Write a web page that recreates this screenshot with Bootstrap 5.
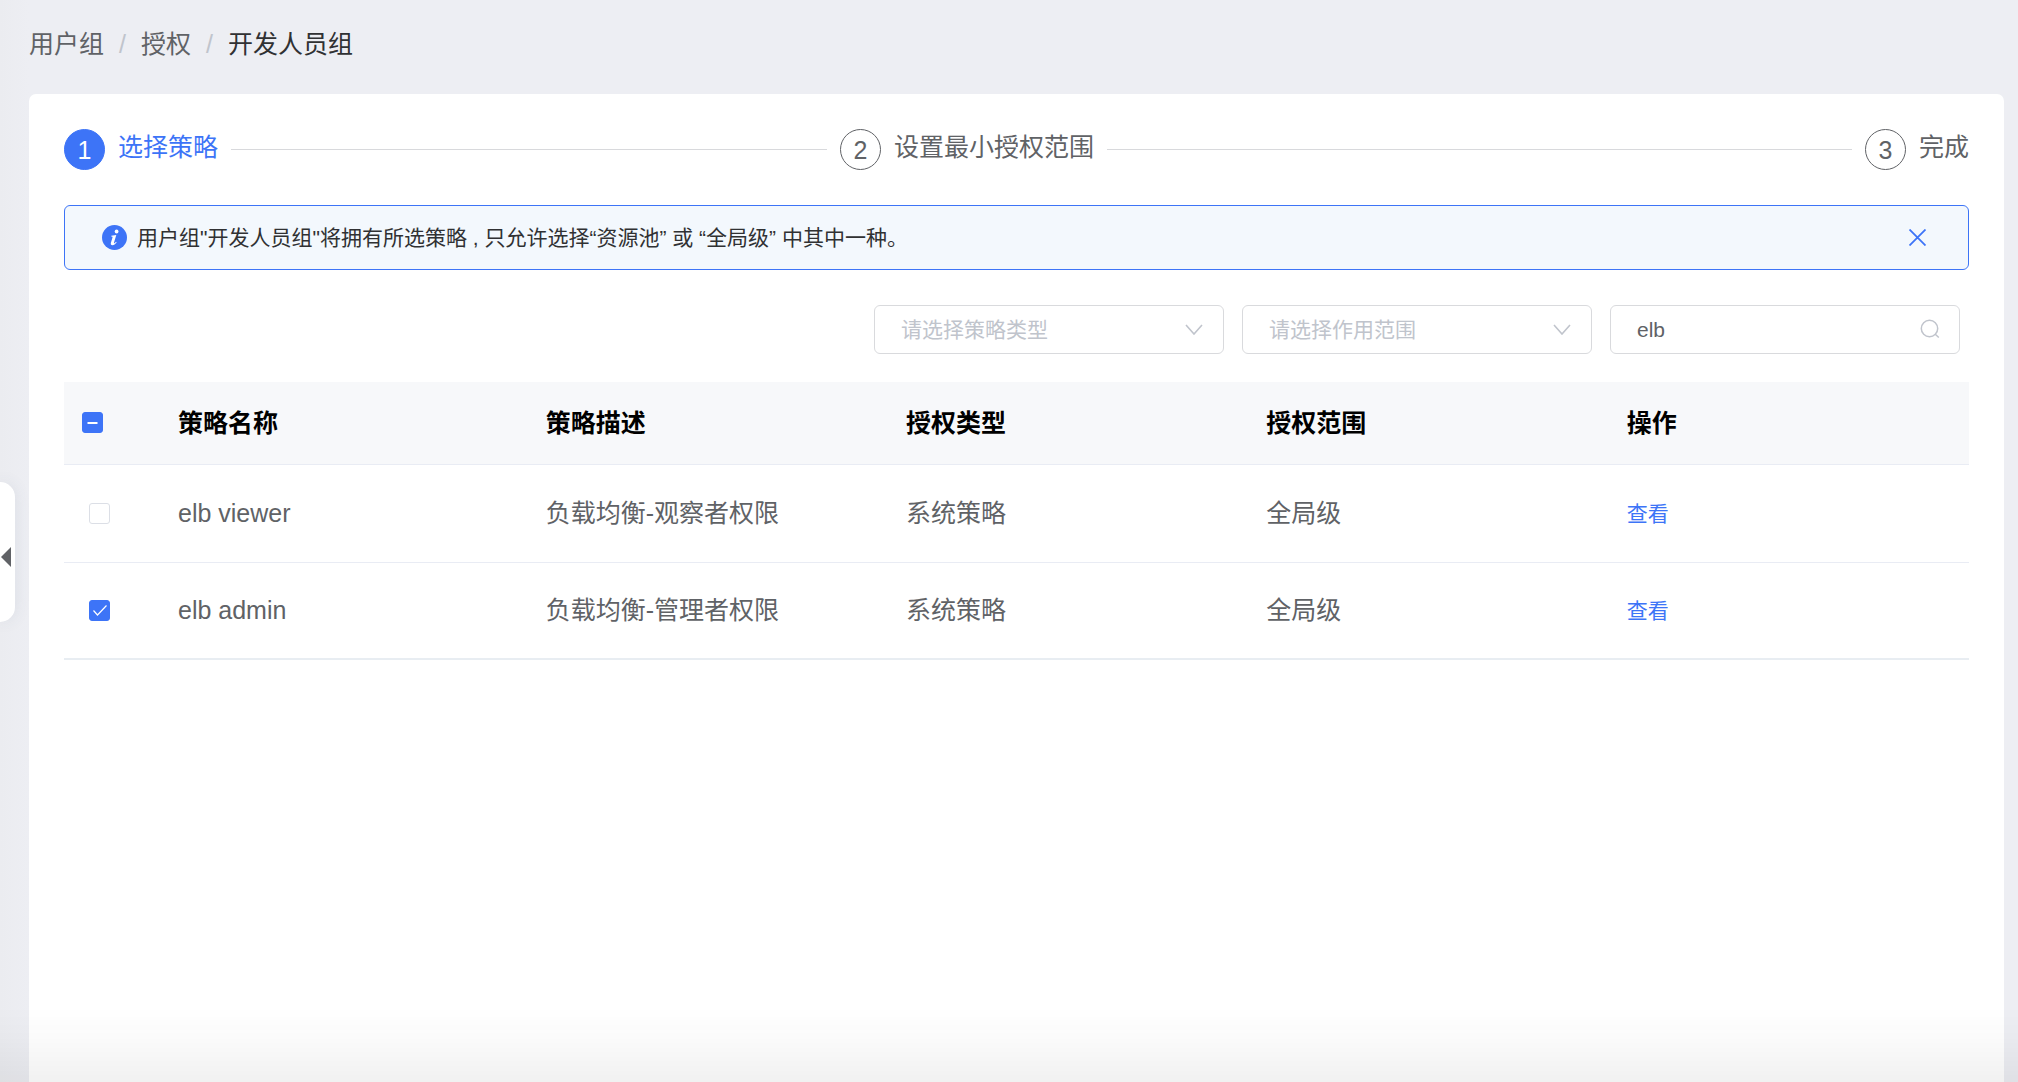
<!DOCTYPE html>
<html lang="zh-CN">
<head>
<meta charset="utf-8">
<meta name="viewport" content="width=device-width, initial-scale=1">
<title>用户组授权</title>
<link href="https://cdn.jsdelivr.net/npm/bootstrap@5.3.0/dist/css/bootstrap.min.css" rel="stylesheet">
<style>
:root { --brand: #3d74f7; --ink: #606266; --hint: #c0c4cc; }
body {
  font-family: "Liberation Sans", "Noto Sans CJK SC", sans-serif;
  font-size: 25px; line-height: 36px; color: var(--ink);
  background: linear-gradient(to right, #ebecf0, #edeef3 29px);
}
.page { padding: 0 14px 0 29px; }
.crumbs { --bs-breadcrumb-divider-color: var(--hint); --bs-breadcrumb-item-padding-x: 15px;
  --bs-breadcrumb-item-active-color: #303133; font-size: 25px; padding: 26px 0 32px; }
.crumbs a { color: var(--ink); text-decoration: none; }
.panel { border-radius: 7px 7px 0 0; padding: 35px 35px 0; }
.steps { height: 41px; gap: 13px; }
.step-item { gap: 13px; }
.step-no { width: 41px; height: 41px; border: 1px solid var(--ink); border-radius: 50%; }
.step-name { padding-bottom: 6px; white-space: nowrap; }
.step-on { color: var(--brand); }
.step-on .step-no { background: var(--brand); border-color: var(--brand); color: #fff; }
.step-line { height: 1px; background: #d8d9dc; flex: 4 1 0; }
.step-line-long { flex-grow: 5; }
.notice { margin: 35px 0; height: 65px; padding: 0 42px 0 37px; border: 1px solid var(--brand);
  border-radius: 6px; background: #f3f8fd; color: #303133; font-size: 21px; line-height: 30px; gap: 10px; }
.notice-x { border: 0; background: none; padding: 0; line-height: 0; }
.filters { gap: 18px; padding-right: 9px; margin-bottom: 28px; }
.filter { width: 350px; height: 49px; border: 1px solid #d9dadd; border-radius: 6px;
  background-color: #fff; padding: 0 26px; font-size: 21px; line-height: 30px; color: var(--ink); }
.filter.form-select { color: var(--hint); background-size: 18px 11px; background-position: right 20px center;
  background-image: url("data:image/svg+xml,%3Csvg xmlns='http://www.w3.org/2000/svg' viewBox='0 0 18 11'%3E%3Cpath d='M1 1l8 9 8-9' fill='none' stroke='%23c0c4cc' stroke-width='1.6'/%3E%3C/svg%3E"); }
.search-icon { top: 14px; right: 20px; pointer-events: none; }
.policies { table-layout: fixed; color: var(--ink); margin: 0; --bs-table-color: var(--ink); --bs-table-bg: #fff; }
.policies > :not(caption) > * > * { padding: 0 18px; height: 98px; border-bottom: 1px solid #e9ecf4; vertical-align: middle; white-space: nowrap; }
.policies > thead > tr > th { height: 82px; background: #f7f8fa; color: #000; font-weight: 700; }
.policies > tbody > tr:last-child > td { height: 97px; border-bottom: 2px solid #e8edf2; }
.policies > tbody > tr > td:first-child { padding-left: 25px; }
.col-pick { width: 96px; }
.col-name { width: 19.3%; }
.policies .form-check-input { display: block; width: 21px; height: 21px; margin: 0; border: 1px solid #dcdfe6; border-radius: 3px; }
.policies .form-check-input:checked, .policies .form-check-input:indeterminate { background-color: var(--brand); border-color: var(--brand); }
.policies .form-check-input:checked { background-image: url("data:image/svg+xml,%3Csvg xmlns='http://www.w3.org/2000/svg' viewBox='0 0 19 19'%3E%3Cpath d='M3.5 9.5l4 4.500 9-9.500' fill='none' stroke='%23fff' stroke-width='1.200'/%3E%3C/svg%3E"); }
.policies .form-check-input:indeterminate { background-image: url("data:image/svg+xml,%3Csvg xmlns='http://www.w3.org/2000/svg' viewBox='0 0 19 19'%3E%3Cpath d='M4.500 10h10' fill='none' stroke='%23fff' stroke-width='2'/%3E%3C/svg%3E"); }
.view-link { color: var(--brand); font-size: 21px; text-decoration: none; }
.drawer-tab { left: 0; top: 482px; width: 15px; height: 140px; border: 0; padding: 10px 4px 0 1px; border-radius: 0 18px 18px 0;
  background: #fff; box-shadow: 0 0 16px rgba(70, 90, 120, .1); z-index: 2; }
.fade-foot { height: 76px; pointer-events: none; background: linear-gradient(to bottom, transparent, rgba(0, 0, 0, .015) 40%, rgba(0, 0, 0, .055)); }
</style>
<script src="https://cdn.jsdelivr.net/npm/bootstrap@5.3.0/dist/js/bootstrap.bundle.min.js"></script>
</head>
<body>
<div class="page d-flex flex-column min-vh-100">
  <nav aria-label="breadcrumb">
    <ol class="breadcrumb crumbs mb-0">
      <li class="breadcrumb-item"><a href="#">用户组</a></li>
      <li class="breadcrumb-item"><a href="#">授权</a></li>
      <li class="breadcrumb-item active" aria-current="page">开发人员组</li>
    </ol>
  </nav>
  <main class="panel bg-white flex-grow-1">
    <div class="steps d-flex align-items-center">
      <span class="step-item step-on d-flex align-items-center">
        <span class="step-no d-flex align-items-center justify-content-center">1</span>
        <span class="step-name">选择策略</span>
      </span>
      <span class="step-line"></span>
      <span class="step-item d-flex align-items-center">
        <span class="step-no d-flex align-items-center justify-content-center">2</span>
        <span class="step-name">设置最小授权范围</span>
      </span>
      <span class="step-line step-line-long"></span>
      <span class="step-item d-flex align-items-center">
        <span class="step-no d-flex align-items-center justify-content-center">3</span>
        <span class="step-name">完成</span>
      </span>
    </div>

    <div class="notice d-flex align-items-center" role="alert">
      <svg class="flex-shrink-0" width="25" height="25" viewBox="0 0 25 25" aria-hidden="true">
        <circle cx="12.500" cy="12.500" r="12.500" fill="#3d74f7"/>
        <circle cx="14.600" cy="6.500" r="1.900" fill="#fff"/>
        <path d="M9.300 10.700l5-.8-2.300 7.600c-.3 1.100.6.9 2-.8l.7.500c-1.500 2.100-2.800 3-4.200 3-1.500 0-2-1-1.600-2.400l1.600-5.400c.2-.8 0-1-1.400-1z" fill="#fff"/>
      </svg>
      <span class="flex-grow-1">用户组"开发人员组"将拥有所选策略 , 只允许选择“资源池” 或 “全局级” 中其中一种。</span>
      <button class="notice-x" type="button" aria-label="关闭">
        <svg width="17" height="17" viewBox="0 0 17 17"><path d="M.5.5l16 16M16.500.5l-16 16" stroke="#3d74f7" stroke-width="1.800"/></svg>
      </button>
    </div>

    <form class="filters d-flex justify-content-end">
      <select class="form-select filter" aria-label="策略类型"><option>请选择策略类型</option></select>
      <select class="form-select filter" aria-label="作用范围"><option>请选择作用范围</option></select>
      <div class="position-relative">
        <input class="form-control filter" type="text" value="elb" aria-label="搜索策略">
        <svg class="search-icon position-absolute" width="20" height="20" viewBox="0 0 20 20" aria-hidden="true">
          <circle cx="9.500" cy="9.500" r="8.200" fill="none" stroke="#c0c4cc" stroke-width="1.500"/>
          <path d="M15 15l3.800 3.500" stroke="#c0c4cc" stroke-width="1.500"/>
        </svg>
      </div>
    </form>

    <table class="table policies">
      <colgroup><col class="col-pick"><col class="col-name"><col><col><col><col></colgroup>
      <thead>
        <tr>
          <th><input class="form-check-input" type="checkbox" id="pick-all" aria-label="全选"></th>
          <th>策略名称</th><th>策略描述</th><th>授权类型</th><th>授权范围</th><th>操作</th>
        </tr>
      </thead>
      <tbody>
        <tr>
          <td><input class="form-check-input" type="checkbox" aria-labelledby="viewer"></td>
          <td id="viewer">elb viewer</td><td>负载均衡-观察者权限</td><td>系统策略</td><td>全局级</td>
          <td><a class="view-link" href="#">查看</a></td>
        </tr>
        <tr>
          <td><input class="form-check-input" type="checkbox" aria-labelledby="admin" checked></td>
          <td id="admin">elb admin</td><td>负载均衡-管理者权限</td><td>系统策略</td><td>全局级</td>
          <td><a class="view-link" href="#">查看</a></td>
        </tr>
      </tbody>
    </table>
  </main>
</div>
<button class="drawer-tab position-fixed d-flex align-items-center" type="button" aria-label="收起侧栏">
  <svg width="10" height="20" viewBox="0 0 10 20"><path d="M0 10L10 0v20z" fill="#606266"/></svg>
</button>
<div class="fade-foot fixed-bottom"></div>
<script>document.getElementById('pick-all').indeterminate = true;</script>
</body>
</html>
